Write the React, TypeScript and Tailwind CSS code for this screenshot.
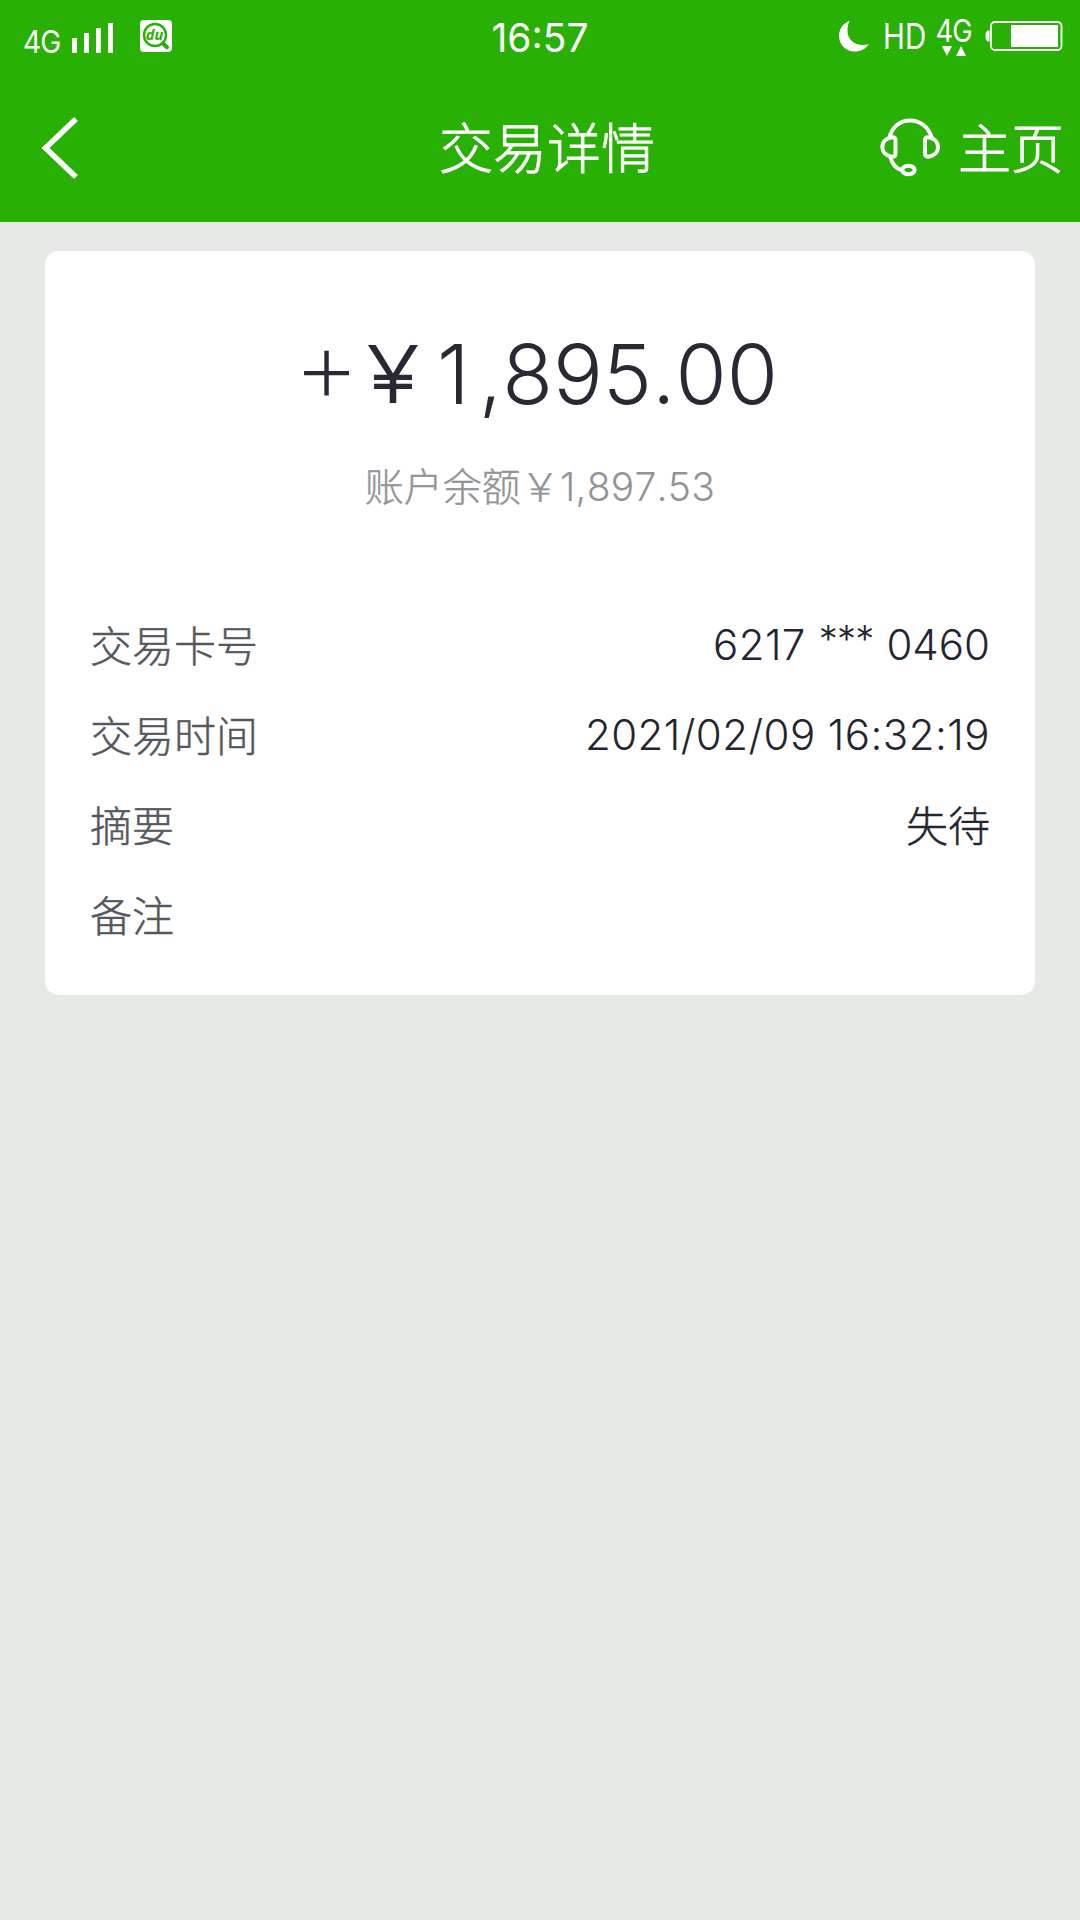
import type { ReactNode } from "react";

const details = [
  { label: "交易卡号", value: <CardNumber /> },
  { label: "交易时间", value: <span className="tracking-[0.45px]">2021/02/09 16:32:19</span> },
  { label: "摘要", value: <Cjk>失待</Cjk> },
  { label: "备注", value: "" },
];

// The light CJK face is a bit thin on its own, so it gets a hairline stroke
function Cjk({ children }: { children: ReactNode }) {
  return (
    <span className="relative top-[1.5px] [-webkit-text-stroke:0.45px_currentColor]">{children}</span>
  );
}

function CardNumber() {
  return (
    <span className="flex">
      <span className="tracking-[0.4px]">6217</span>
      <span className="relative -top-[6px] mx-[13px] text-[38px] tracking-[-0.8px]">***</span>
      <span>0460</span>
    </span>
  );
}

function SignalBars() {
  return (
    <svg width="42" height="30" viewBox="0 0 42 30" fill="white">
      <rect x="0" y="15" width="5" height="15" />
      <rect x="12" y="10" width="5" height="20" />
      <rect x="24" y="5" width="5" height="25" />
      <rect x="36" y="0" width="5" height="30" />
    </svg>
  );
}

function DuSearchIcon() {
  return (
    <svg width="32" height="32" viewBox="0 0 32 32">
      <rect width="32" height="32" rx="4" fill="white" />
      <circle cx="15" cy="15" r="11" fill="none" stroke="#28b005" strokeWidth="2.4" />
      <path d="M23 23.5l4 3.7" stroke="#28b005" strokeWidth="4" strokeLinecap="round" />
      <text
        x="14.5"
        y="19.5"
        fill="#28b005"
        fontFamily="Open Sans, sans-serif"
        fontSize="14.5"
        fontWeight="700"
        fontStyle="italic"
        textAnchor="middle"
      >
        du
      </text>
    </svg>
  );
}

function MoonIcon() {
  return (
    <svg width="30" height="32" viewBox="0 0 30 32" fill="white">
      <path d="M10.7 0.7C3.5 3.5 0 9.3 0 15.8C0 24.6 6.8 31.6 15.3 31.6C22 31.6 27.2 28.5 29.8 24C18.5 27.5 8.5 21 8.5 11C8.5 7 9 3.5 10.7 0.7Z" />
    </svg>
  );
}

function BatteryIcon() {
  return (
    <svg width="78" height="32" viewBox="0 0 78 32" fill="none">
      <path d="M4.5 10.5C1.5 10.5 0.5 12 0.5 16C0.5 20 1.5 21.5 4.5 21.5Z" fill="white" />
      <rect x="6" y="2" width="70.5" height="28" rx="4" stroke="white" strokeWidth="1.8" />
      <rect x="26" y="5" width="47" height="22" fill="white" />
    </svg>
  );
}

function HeadsetIcon() {
  return (
    <svg
      width="60"
      height="60"
      viewBox="0 0 60 60"
      fill="none"
      stroke="white"
      strokeWidth="4"
      strokeLinecap="round"
      strokeLinejoin="round"
    >
      <path d="M9.7 19C12 9 20 2.5 30 2.5C40 2.5 48.5 9 51.5 19" />
      <path d="M11 19.5C12.5 19 15.5 19 15.5 22V36C15.5 38.5 13 39 11 38.5C5.5 37.5 2.3 33.5 2.3 29C2.3 24.5 5.5 20.5 11 19.5Z" />
      <path d="M49.5 19.5C48 19 45 19 45 22V36C45 38.5 47.5 39 49.5 38.5C55 37.5 58 33.5 58 29C58 24.5 55 20.5 49.5 19.5Z" />
      <path d="M10.5 39.5C12 45.5 16 50.5 21.5 52" />
      <ellipse cx="28.5" cy="52" rx="6.2" ry="4.2" />
    </svg>
  );
}

function StatusBar() {
  return (
    <div className="flex h-[74px] items-start justify-between text-white">
      <div className="flex w-[360px] items-start pl-[23px]">
        <span className="w-[49px] pt-[26px] text-[31px] leading-[31px]">
          <span className="inline-block origin-left scale-x-[0.91] tracking-[-1px]">4G</span>
        </span>
        <div className="pt-[23px]">
          <SignalBars />
        </div>
        <div className="pt-[20px] pl-[26px]">
          <DuSearchIcon />
        </div>
      </div>
      <span className="pt-[18px] text-[39px] leading-[40px]">16:57</span>
      <div className="flex w-[360px] items-start justify-end pr-[17px]">
        <div className="shrink-0 pt-[20px]">
          <MoonIcon />
        </div>
        <span className="w-[66px] shrink-0 pt-[18px] pl-[14px] text-[36px] leading-[36px]">
          <span className="inline-block origin-left scale-x-[0.82]">HD</span>
        </span>
        <div className="flex w-[38px] shrink-0 flex-col items-center pt-[17px]">
          <span className="scale-x-[0.88] text-[31px] leading-[28px] tracking-[-1px]">4G</span>
          <svg className="mt-px" width="24" height="10" viewBox="0 0 24 10" fill="white">
            <path d="M0 0h10L5 10zM14 10h10L19 0z" />
          </svg>
        </div>
        <div className="shrink-0 pt-[20px] pl-[12px]">
          <BatteryIcon />
        </div>
      </div>
    </div>
  );
}

function NavBar() {
  return (
    <div className="grid h-[148px] grid-cols-[360px_1fr_360px] items-start font-light text-white">
      <div className="pt-[42px] pl-[41px]">
        <svg width="40" height="64" viewBox="0 0 40 64" fill="none" stroke="white" strokeWidth="5.5">
          <path d="M35 3L4.5 32L35 61" />
        </svg>
      </div>
      <h1 className="pt-[36px] pl-[14px] text-center text-[54px] leading-[80px] [-webkit-text-stroke:0.8px_white]">
        交易详情
      </h1>
      <div className="flex items-start justify-end pr-[16px]">
        <div className="pt-[44px] pr-[18px]">
          <HeadsetIcon />
        </div>
        <span className="pt-[36px] text-[53px] leading-[80px] [-webkit-text-stroke:0.8px_white]">主页</span>
      </div>
    </div>
  );
}

function DetailRow({ label, children }: { label: string; children: ReactNode }) {
  return (
    <div className="flex h-[90px] items-center justify-between text-[42px] leading-[60px] whitespace-nowrap">
      <span className="text-[#55575e]">
        <Cjk>{label}</Cjk>
      </span>
      <span className="text-[#24252f]">{children}</span>
    </div>
  );
}

export default function App() {
  return (
    <div className="h-[1920px] w-[1080px] overflow-hidden bg-[#e7e9e7] font-['Inter','Noto_Sans_CJK_SC',sans-serif] [font-kerning:none]">
      <header className="h-[222px] bg-[#28b005]">
        <StatusBar />
        <NavBar />
      </header>

      <main className="mx-[45px] mt-[29px] h-[744px] rounded-[14px] bg-white px-[45px] font-light">
        <p className="flex items-center justify-center pt-[73px] pr-[9px] text-[83px] leading-[100px] whitespace-nowrap text-[#282934]">
          <span className="-mt-[18px] text-[104px] font-[250]">+</span>
          <span className="-ml-[6px] mr-[5px] text-[78px] [-webkit-text-stroke:2px_currentColor]">￥</span>
          <span className="mr-[9px]">1</span>
          <span>,895.00</span>
        </p>
        <p className="pt-[33px] text-center text-[39px] leading-[60px] whitespace-nowrap text-[#919496]">
          <span className="[-webkit-text-stroke:0.4px_currentColor]">账户余额￥</span>
          <span className="tracking-[0.25px]">1,897.53</span>
        </p>
        <div className="pt-[83px]">
          {details.map((item) => (
            <DetailRow key={item.label} label={item.label}>
              {item.value}
            </DetailRow>
          ))}
        </div>
      </main>
    </div>
  );
}
